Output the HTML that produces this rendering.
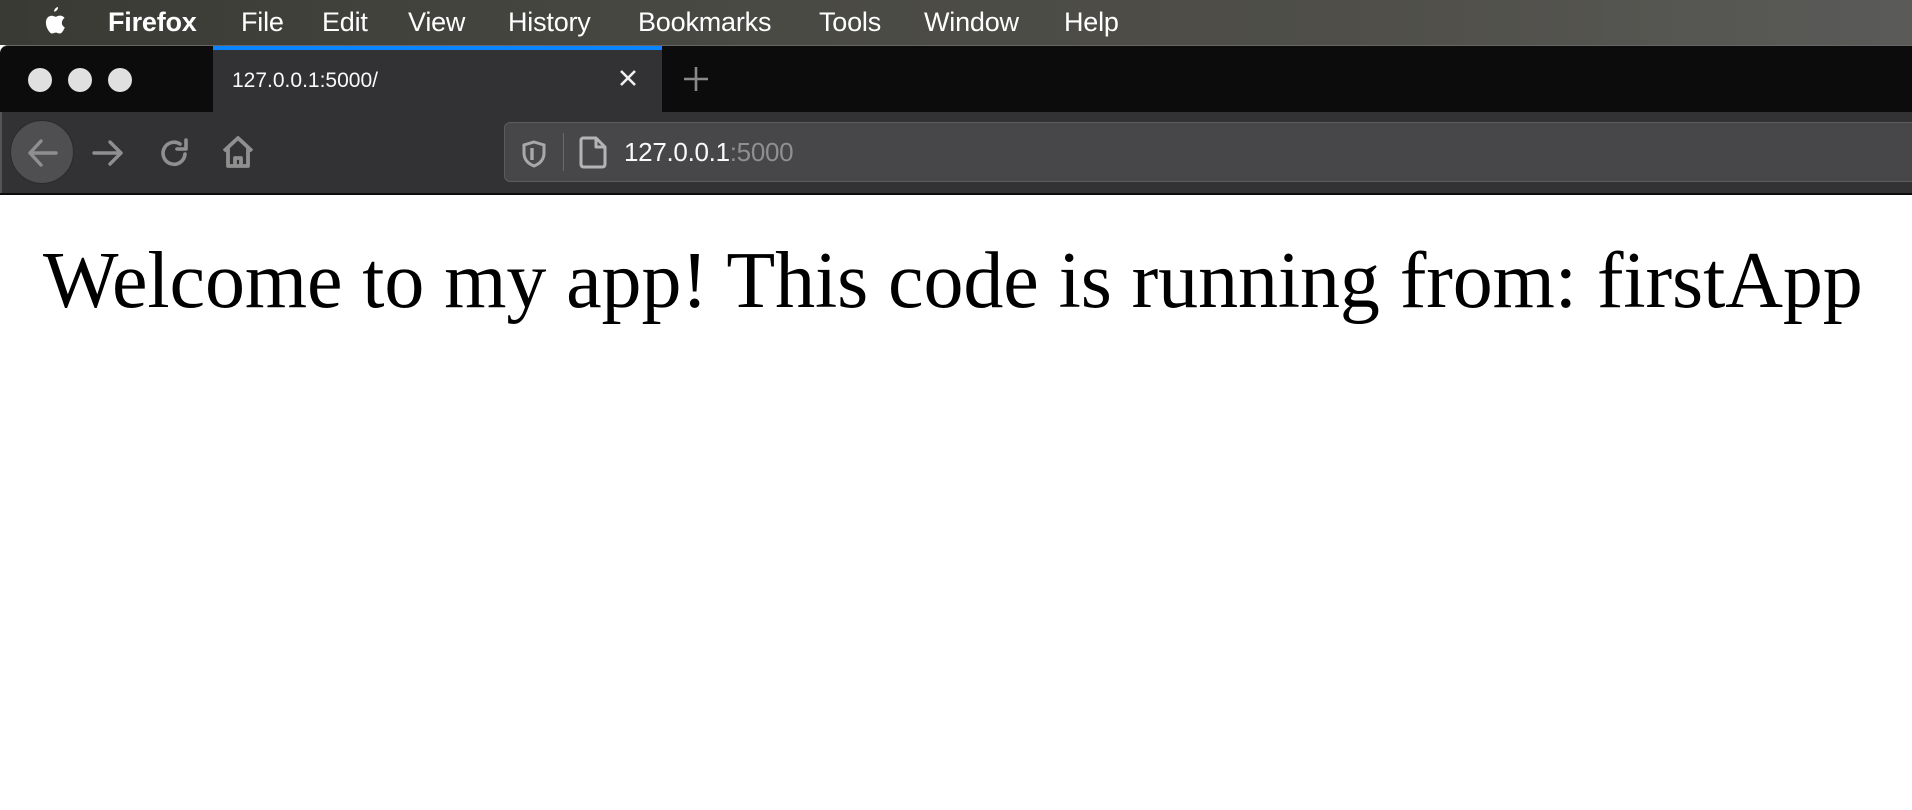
<!DOCTYPE html>
<html><head><meta charset="utf-8"><style>
*{margin:0;padding:0;box-sizing:border-box}
body{width:1912px;height:810px;overflow:hidden;background:#fff;position:relative;font-family:"Liberation Sans",sans-serif}
.menubar{position:absolute;left:0;top:0;width:1912px;height:45px;background:linear-gradient(90deg,#3a3a34,#4a4a44 40%,#4f4e48 70%,#5a5b58);}
.menubar span{position:absolute;top:6px;color:#fff;font-size:27px;line-height:32px;letter-spacing:-0.2px}
.tabs{position:absolute;left:0;top:45px;width:1912px;height:67px;background:#0c0c0d;border-top:1px solid #666;border-radius:8px 0 0 0}
.tab{position:absolute;left:213px;top:0;width:449px;height:67px;background:#323234;border-top:4px solid #0a84ff}
.dot{position:absolute;top:68px;width:24px;height:24px;border-radius:50%;background:#e0e0e0}
.toolbar{position:absolute;left:0;top:112px;width:1912px;height:81px;background:#323234;border-left:2px solid #555}
.url{position:absolute;left:502px;top:10px;width:1420px;height:60px;background:#474749;border:1px solid #5c5c5e;border-radius:6px}
.content{position:absolute;left:0;top:193px;width:1912px;height:617px;background:#fff;border-top:2px solid #0c0c0d}
h1{position:absolute;left:43px;top:236px;font-family:"Liberation Serif",serif;font-weight:normal;font-size:80px;line-height:90px;color:#000;white-space:nowrap;letter-spacing:-0.1px}
</style></head><body>
<div class="menubar">
<svg style="position:absolute;left:42px;top:7px" width="24" height="29" viewBox="0 0 24 29"><path fill="#fff" d="M16 0c.3 2-1.5 4.5-3.8 4.7C11.9 2.6 13.7.4 16 0zM20 15.5c0-3 2.4-4.3 2.6-4.5-1.4-2.1-3.6-2.4-4.4-2.4-1.9-.2-3.6 1.1-4.5 1.1-1 0-2.4-1.1-3.900-1C7.7 8.7 5.9 9.8 4.9 11.5c-2.1 3.6-.5 9 1.5 12 1 1.4 2.2 3.1 3.7 3 1.5-.1 2-.9 3.8-.9 1.8 0 2.3.9 3.8.9 1.6 0 2.6-1.5 3.5-2.9 1.1-1.6 1.6-3.2 1.6-3.3-.1 0-3-1.1-3-4.8z"/></svg>
<span style="left:108px;font-weight:bold">Firefox</span>
<span style="left:241px">File</span>
<span style="left:322px">Edit</span>
<span style="left:408px">View</span>
<span style="left:508px">History</span>
<span style="left:638px">Bookmarks</span>
<span style="left:819px">Tools</span>
<span style="left:924px">Window</span>
<span style="left:1064px">Help</span>
</div>
<div class="tabs">
<div class="dot" style="left:28px;top:22px"></div>
<div class="dot" style="left:68px;top:22px"></div>
<div class="dot" style="left:108px;top:22px"></div>
<div class="tab">
<span style="position:absolute;left:19px;top:19px;color:#f9f9fa;font-size:21px;line-height:24px">127.0.0.1:5000/</span>
<svg style="position:absolute;left:405px;top:18px" width="20" height="20" viewBox="0 0 20 20"><path d="M3 3L17 17M17 3L3 17" stroke="#f0f0f0" stroke-width="2.6"/></svg>
</div>
<svg style="position:absolute;left:683px;top:20px" width="26" height="26" viewBox="0 0 26 26"><path d="M13 1V25M1 13H25" stroke="#8a8a8c" stroke-width="2.6"/></svg>
</div>
<div class="toolbar">
<div style="position:absolute;left:8px;top:8px;width:64px;height:64px;border-radius:50%;background:#4f4f51;border:1px solid #2a2a2c"></div>
<svg style="position:absolute;left:24px;top:24px" width="34" height="34" viewBox="0 0 34 34" fill="none" stroke="#8f8f90" stroke-width="3.4" stroke-linecap="round" stroke-linejoin="round"><path d="M30 17H4M15 5L4 17L15 29"/></svg>
<svg style="position:absolute;left:90px;top:24px" width="34" height="34" viewBox="0 0 34 34" fill="none" stroke="#8f8f90" stroke-width="3.4" stroke-linecap="round" stroke-linejoin="round"><path d="M2 17H29M18 6L29 17L18 28"/></svg>
<svg style="position:absolute;left:156px;top:24px" width="34" height="34" viewBox="0 0 34 34" fill="none" stroke="#8f8f90" stroke-width="3.6" stroke-linecap="round" stroke-linejoin="round"><path d="M27 18A11 11 0 1 1 22 8M28 4V13H19"/></svg>
<svg style="position:absolute;left:218px;top:22px" width="36" height="36" viewBox="0 0 36 36" fill="none" stroke="#8f8f90" stroke-width="3.8" stroke-linejoin="round"><path d="M4 17L18 4L32 17M8 14V32H28V14M15 32V24H21V32"/></svg>
<div class="url">
<svg style="position:absolute;left:16px;top:17px" width="26" height="28" viewBox="0 0 26 28" fill="none" stroke="#a8a8aa" stroke-width="3"><path d="M13 2L23 5V13C23 20 18 24 13 26C8 24 3 20 3 13V5Z"/><path d="M11 8V20" stroke-width="3.4"/></svg>
<div style="position:absolute;left:58px;top:10px;width:1px;height:38px;background:#6a6a6c"></div>
<svg style="position:absolute;left:73px;top:13px" width="30" height="34" viewBox="0 0 30 34" fill="none" stroke="#b4b4b6" stroke-width="3" stroke-linejoin="round"><path d="M5 2H18L27 11V28C27 30 26 31 24 31H6C4 31 3 30 3 28V4C3 3 4 2 5 2Z M18 2V11H27"/></svg>
<span style="position:absolute;left:119px;top:14px;font-size:26px;line-height:30px;color:#f9f9fa;letter-spacing:-0.3px">127.0.0.1<span style="color:#8f8f91">:5000</span></span>
</div>
</div>
<div class="content"></div>
<h1>Welcome to my app! This code is running from: firstApp</h1>
</body></html>
